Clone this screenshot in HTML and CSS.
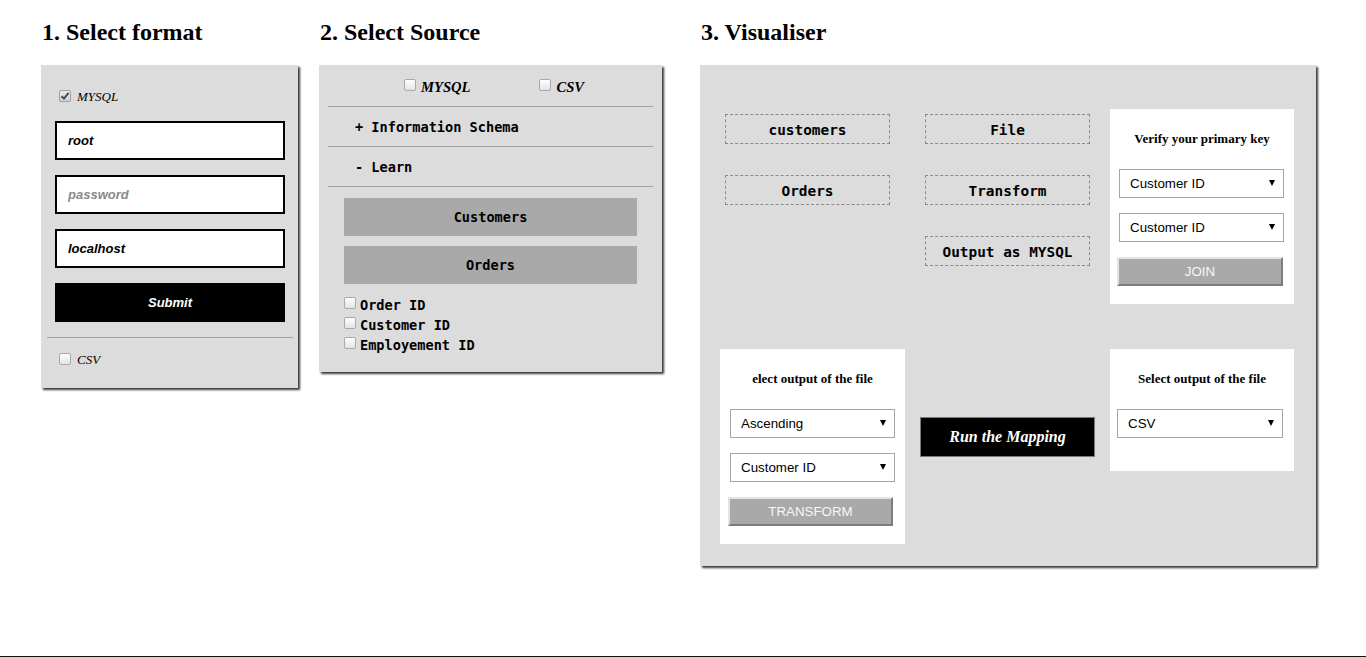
FILE: index.html
```html
<!DOCTYPE html>
<html lang="en">
<head>
<meta charset="utf-8">
<title>Mapping</title>
<link rel="stylesheet" href="styles.css">
</head>
<body>
<main class="page">
  <section class="col col-format">
    <h2 class="title">1. Select format</h2>
    <div class="panel panel-format">
      <div class="stack">
        <label class="check-row">
          <span class="cbox checked"><svg viewBox="0 0 10 10" width="10" height="10"><path d="M1.5 5.2 L4 7.6 L8.6 1.8" fill="none" stroke="#4a4a4a" stroke-width="2"/></svg></span>
          <span class="lbl-serif">MYSQL</span>
        </label>
        <input class="field" type="text" value="root">
        <input class="field" type="password" placeholder="password">
        <input class="field" type="text" value="localhost">
        <button class="submit" type="button">Submit</button>
      </div>
      <div class="rule rule-format"></div>
      <label class="check-row foot">
        <span class="cbox"></span>
        <span class="lbl-serif">CSV</span>
      </label>
    </div>
  </section>

  <section class="col col-source">
    <h2 class="title">2. Select Source</h2>
    <div class="panel panel-source">
      <div class="source-toggle">
        <label class="src-opt"><span class="cbox"></span><span class="lbl-serif-bold">MYSQL</span></label>
        <label class="src-opt"><span class="cbox"></span><span class="lbl-serif-bold">CSV</span></label>
      </div>
      <div class="rule"></div>
      <div class="tree-item">+ Information Schema</div>
      <div class="rule"></div>
      <div class="tree-item">- Learn</div>
      <div class="rule"></div>
      <div class="tables">
        <div class="table-btn">Customers</div>
        <div class="table-btn">Orders</div>
        <ul class="fields">
          <li class="field-row"><span class="cbox"></span><span>Order ID</span></li>
          <li class="field-row"><span class="cbox"></span><span>Customer ID</span></li>
          <li class="field-row"><span class="cbox"></span><span>Employement ID</span></li>
        </ul>
      </div>
    </div>
  </section>

  <section class="col col-vis">
    <h2 class="title">3. Visualiser</h2>
    <div class="panel panel-vis">
      <div class="vis-grid">
        <div class="nodes">
          <div class="node">customers</div>
          <div class="node">Orders</div>
        </div>
        <div class="nodes">
          <div class="node">File</div>
          <div class="node">Transform</div>
          <div class="node">Output as MYSQL</div>
        </div>
        <div class="card card-verify">
          <div class="card-title">Verify your primary key</div>
          <div class="select"><span>Customer ID</span><span class="caret"></span></div>
          <div class="select"><span>Customer ID</span><span class="caret"></span></div>
          <button class="gray-btn" type="button">JOIN</button>
        </div>
        <div class="card card-transform">
          <div class="card-title">elect output of the file</div>
          <div class="select"><span>Ascending</span><span class="caret"></span></div>
          <div class="select"><span>Customer ID</span><span class="caret"></span></div>
          <button class="gray-btn" type="button">TRANSFORM</button>
        </div>
        <div class="run-cell">
          <button class="run-btn" type="button">Run the Mapping</button>
        </div>
        <div class="card card-output">
          <div class="card-title">Select output of the file</div>
          <div class="select select-wide"><span>CSV</span><span class="caret"></span></div>
        </div>
      </div>
    </div>
  </section>
</main>
<footer class="footer"></footer>
</body>
</html>
```

FILE: styles.css
```css
html, body {
  margin: 0;
  padding: 0;
  background: #fff;
}

body {
  min-height: 100vh;
  display: flex;
  flex-direction: column;
  font-family: "Liberation Serif", "Times New Roman", serif;
  color: #000;
}

.page {
  flex: 1;
  display: flex;
  align-items: flex-start;
  padding-left: 41px;
}

.col-format { width: 257px; }
.col-source { width: 343px; margin-left: 21px; }
.col-vis { width: 616px; margin-left: 38px; }

.title {
  font-family: "Liberation Serif", "Times New Roman", serif;
  font-weight: bold;
  font-size: 24px;
  line-height: 27px;
  margin: 19px 0 19px 1px;
}

.panel {
  background: #dcdcdc;
  box-shadow: 2px 2px 2px #3a3a3a;
  box-sizing: border-box;
}

/* checkboxes */
.cbox {
  display: inline-flex;
  align-items: center;
  justify-content: center;
  width: 10px;
  height: 10px;
  border: 1px solid #a9a9a9;
  border-radius: 2px;
  background: linear-gradient(#fefefe, #e4e4e4);
  flex: none;
}
.cbox.checked {
  background: linear-gradient(#e9e9e9, #d2d2d2);
  border-color: #a0a0a0;
}
.cbox svg { display: block; }

.rule {
  height: 1px;
  background: #a3a3a3;
}

/* panel 1 */
.panel-format {
  padding: 21px 13px 20px 14px;
}
.stack {
  display: flex;
  flex-direction: column;
  gap: 15px;
}
.check-row {
  display: flex;
  align-items: center;
  height: 20px;
  padding-left: 4px;
}
.check-row .cbox { margin-right: 6px; margin-top: -1px; }
.lbl-serif {
  font-style: italic;
  font-size: 13px;
  padding-top: 2px;
}
.field {
  box-sizing: border-box;
  width: 230px;
  height: 39px;
  border: 2px solid #000;
  background: #fff;
  padding: 0 11px;
  margin: 0;
  font-family: "Liberation Sans", Arial, sans-serif;
  font-weight: bold;
  font-style: italic;
  font-size: 13px;
  color: #000;
  outline: none;
}
.field::placeholder { color: #8a8a8a; }
.submit {
  width: 230px;
  height: 39px;
  border: none;
  background: #000;
  color: #fff;
  font-family: "Liberation Sans", Arial, sans-serif;
  font-weight: bold;
  font-style: italic;
  font-size: 13px;
  padding: 0;
  margin: 0;
}
.rule-format {
  margin: 15px -8px 0 -8px;
}
.check-row.foot { margin-top: 11px; margin-bottom: -1px; }

/* panel 2 */
.panel-source {
  padding: 0 9px 18px;
}
.source-toggle {
  height: 41px;
  box-sizing: border-box;
  padding-top: 3px;
  display: flex;
  align-items: center;
  padding-left: 76px;
  gap: 69px;
}
.src-opt {
  display: flex;
  align-items: center;
  gap: 5px;
}
.src-opt .cbox { margin-top: -5px; }
.lbl-serif-bold {
  font-weight: bold;
  font-style: italic;
  font-size: 14.6px;
}
.tree-item {
  height: 39px;
  box-sizing: border-box;
  padding-top: 1px;
  display: flex;
  align-items: center;
  padding-left: 27px;
  font-family: "DejaVu Sans Mono", "Liberation Mono", monospace;
  font-weight: bold;
  font-size: 13.6px;
}
.tables {
  padding: 11px 16px 0;
}
.table-btn {
  height: 38px;
  margin-bottom: 10px;
  background: #a9a9a9;
  display: flex;
  align-items: center;
  justify-content: center;
  font-family: "DejaVu Sans Mono", "Liberation Mono", monospace;
  font-weight: bold;
  font-size: 13.6px;
}
.fields {
  list-style: none;
  margin: 0;
  padding: 0;
}
.field-row {
  height: 20px;
  box-sizing: border-box;
  padding-top: 2px;
  display: flex;
  align-items: center;
  gap: 4px;
  font-family: "DejaVu Sans Mono", "Liberation Mono", monospace;
  font-weight: bold;
  font-size: 13.6px;
}
.field-row .cbox { margin-top: -5px; }

/* panel 3 */
.panel-vis {
  padding: 44px 0 22px 20px;
}
.vis-grid {
  display: grid;
  grid-template-columns: 185px 175px 184px;
  grid-template-rows: 195px auto;
  column-gap: 15px;
  row-gap: 45px;
}
.nodes {
  display: flex;
  flex-direction: column;
  gap: 31px;
  padding: 5px 0 0 5px;
}
.node {
  box-sizing: border-box;
  width: 165px;
  height: 30px;
  padding-top: 2px;
  border: 1px dashed #8a8a8a;
  display: flex;
  align-items: center;
  justify-content: center;
  font-family: "DejaVu Sans Mono", "Liberation Mono", monospace;
  font-weight: bold;
  font-size: 14.4px;
}
.card {
  background: #fff;
  box-sizing: border-box;
  padding: 22px 0 18px 9px;
  display: flex;
  flex-direction: column;
  align-items: flex-start;
  gap: 15px;
}
.card-verify { height: 195px; }
.card-transform { height: 195px; padding-left: 10px; }
.card-output { align-self: start; padding-left: 7px; padding-bottom: 33px; }
.card-title {
  align-self: stretch;
  text-align: center;
  font-weight: bold;
  font-size: 13px;
  line-height: 16px;
  margin-bottom: 7px;
  margin-left: -9px;
}
.card-transform .card-title { margin-left: -10px; }
.card-output .card-title { margin-left: -7px; }
.select {
  box-sizing: border-box;
  width: 165px;
  height: 29px;
  border: 1px solid #a6a6a6;
  background: #fff;
  display: flex;
  align-items: center;
  justify-content: space-between;
  padding: 0 8px 0 10px;
  font-family: "Liberation Sans", Arial, sans-serif;
  font-size: 13.33px;
  color: #000;
}
.select-wide { width: 166px; }
.caret {
  width: 0;
  height: 0;
  border-left: 3px solid transparent;
  border-right: 3px solid transparent;
  border-top: 6px solid #000;
  margin-top: -2px;
}
.gray-btn {
  box-sizing: border-box;
  width: 166px;
  height: 29px;
  margin: 0 0 0 -2px;
  padding: 0;
  background: #a9a9a9;
  border: 2px solid;
  border-color: #e3e3e3 #7d7d7d #7d7d7d #e3e3e3;
  color: #f7f7f7;
  font-family: "Liberation Sans", Arial, sans-serif;
  font-size: 13.33px;
}
.card-transform .gray-btn { width: 165px; }
.run-cell {
  padding-top: 68px;
}
.run-btn {
  box-sizing: border-box;
  width: 175px;
  height: 40px;
  margin: 0;
  padding: 0;
  background: #000;
  border: 1px solid #7a7a7a;
  color: #fff;
  font-family: "Liberation Serif", "Times New Roman", serif;
  font-weight: bold;
  font-style: italic;
  font-size: 16px;
}

.footer {
  height: 0;
  border-top: 1px solid #111;
}
```
